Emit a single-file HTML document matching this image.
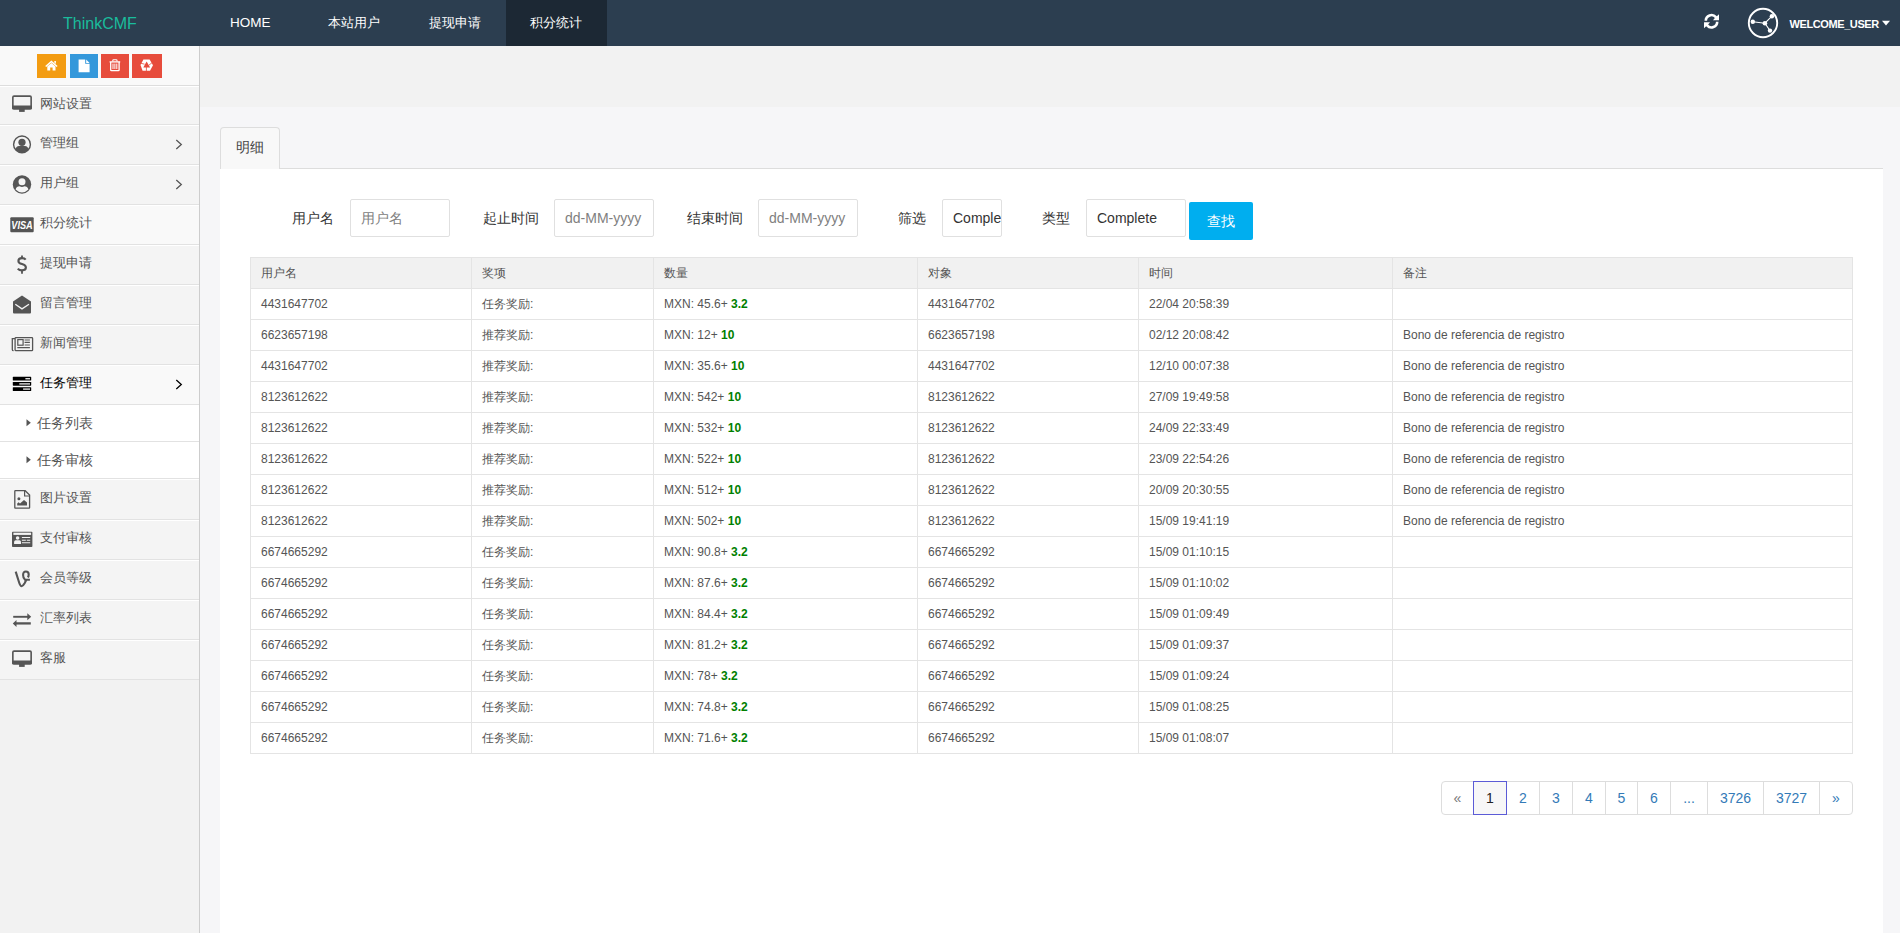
<!DOCTYPE html>
<html><head><meta charset="utf-8">
<style>
*{box-sizing:border-box;margin:0;padding:0}
html,body{width:1900px;height:933px;overflow:hidden;background:#f6f6f8;font-family:"Liberation Sans",sans-serif;}
.abs{position:absolute}
#hdr{position:absolute;left:0;top:0;width:1900px;height:46px;background:#2c3e50;color:#fff}
#hdr .logo{position:absolute;left:63px;top:14.5px;font-size:16px;color:#1abc9c;line-height:18px}
#hdr .nav{position:absolute;top:0;height:46px;line-height:46px;font-size:13px;color:#fff}
#hdr .active{background:#1c2834}
#side{position:absolute;left:0;top:46px;width:200px;height:887px;background:#f2f2f2;border-right:1px solid #cdcdcd}
.tools{position:absolute;left:0;top:46px;width:199px;height:40px;background:#f9f9f9;border-bottom:1px solid #ddd}
.tb{position:absolute;top:54px;height:24px}
.row{position:absolute;left:0;width:199px;border-bottom:1px solid #e2e2e2}
.rt{position:absolute;font-size:13px;line-height:20px;white-space:nowrap}
.ic{position:absolute;overflow:visible}
#main{position:absolute;left:200px;top:46px;width:1700px;height:887px;background:#f6f6f8}
#band{position:absolute;left:200px;top:46px;width:1700px;height:61px;background:#f2f2f2}
#tab{position:absolute;left:220px;top:127px;width:60px;height:42px;border:1px solid #ddd;border-bottom:none;border-radius:4px 4px 0 0;background:#f8f8f8;font-size:14px;color:#444;line-height:39px;padding-left:15px;z-index:3}
#panel{position:absolute;left:220px;top:168px;width:1663px;height:765px;background:#fff;border-top:1px solid #ddd}
.lbl{position:absolute;top:208px;font-size:14px;color:#333;line-height:20px}
.inp{position:absolute;top:199px;height:38px;border:1px solid #e0e0e0;border-radius:2px;background:#fff;font-size:14px;line-height:36px;padding-left:10px;overflow:hidden;white-space:nowrap}
.ph{color:#808080}
#btn{position:absolute;left:1189px;top:202px;width:64px;height:38px;border-radius:2px;background:#00aeef;color:#fff;font-size:14px;line-height:38px;text-align:center}
table{position:absolute;left:250px;top:257px;border-collapse:separate;border-spacing:0;table-layout:fixed;width:1603px;border-left:1px solid #e4e4e4;border-top:1px solid #e4e4e4;font-size:12px;color:#555}
td,th{border-right:1px solid #e4e4e4;border-bottom:1px solid #e4e4e4;height:31px;padding:0 10px;text-align:left;font-weight:normal;white-space:nowrap;overflow:hidden}
th{background:#f1f1f1;color:#555}
b.g{color:#008000}
#pg{position:absolute;left:1441px;top:781px;height:34px;font-size:14px}
#pg span{position:absolute;top:0;height:34px;line-height:32px;border:1px solid #ddd;color:#337ab7;text-align:center;background:#fff}
</style></head><body>
<div id="hdr">
  <div class="logo">ThinkCMF</div>
  <div class="nav" style="left:230px;font-size:13.5px">HOME</div>
  <div class="nav" style="left:328px">本站用户</div>
  <div class="nav" style="left:429px">提现申请</div>
  <div class="nav active" style="left:506px;width:101px;padding-left:24px">积分统计</div>
  <svg class="ic" style="left:1704px;top:14px" width="15" height="14.5" viewBox="0 0 15 14.5"><path d="M0.5 6.8 A7 7 0 0 1 12.86 2.3 L15 0.3 V6.3 H9 L10.87 3.97 A4.4 4.4 0 0 0 3.1 6.8 Z" fill="#fff"/><path d="M14.5 7.7 A7 7 0 0 1 2.14 12.2 L0 14.2 V8.2 H6 L4.13 10.53 A4.4 4.4 0 0 0 11.9 7.7 Z" fill="#fff"/></svg>
  <svg class="ic" style="left:1747px;top:7px" width="32" height="32" viewBox="0 0 32 32"><circle cx="16" cy="16" r="14.2" fill="none" stroke="#fff" stroke-width="1.9"/><path d="M5.8 14.8 L17.9 16.2 L24.9 9.2 M17.9 16.2 L23 23.6" stroke="#fff" stroke-width="1.1" fill="none"/><circle cx="5.8" cy="14.8" r="2.2" fill="#fff"/><circle cx="17.9" cy="16.2" r="2.3" fill="#fff"/><circle cx="24.9" cy="9.2" r="2.2" fill="#fff"/><circle cx="23" cy="23.6" r="2.2" fill="#fff"/></svg>
  <div class="abs" style="left:1789.5px;top:17px;font-size:11px;font-weight:bold;line-height:14px;letter-spacing:-0.4px;color:#fff">WELCOME_USER</div>
  <svg class="ic" style="left:1881px;top:20px" width="10" height="7" viewBox="0 0 10 7"><path d="M1 0.8 H9 L5 5.6 Z" fill="#fff"/></svg>
</div>
<div id="band"></div>
<div id="side"></div>
<div class="tools"></div>
<div class="tb" style="left:37px;width:29px;background:#f39c12"></div>
<div class="tb" style="left:70px;width:28px;background:#3498db"></div>
<div class="tb" style="left:101px;width:28px;background:#e74c3c"></div>
<div class="tb" style="left:132px;width:30px;background:#e74c3c"></div>
<svg class="ic" style="left:45px;top:60px" width="13" height="11" viewBox="0 0 13 11"><path d="M6.4 0.6 L12.6 6 L11.6 7 L6.4 2.5 L1.2 7 L0.2 6 Z" fill="#fff"/><path d="M9.3 0.9 H10.9 V3.9 L9.3 2.5 Z" fill="#fff"/><path d="M2.3 6.4 L6.4 2.9 L10.5 6.4 V10.4 H7.6 V7.6 H5.2 V10.4 H2.3 Z" fill="#fff"/></svg>
<svg class="ic" style="left:78px;top:59px" width="12" height="14" viewBox="0 0 12 14"><path d="M0.6 0.6 H7.2 V4.8 H11.6 V13.2 H0.6 Z" fill="#fff"/><path d="M8.2 0.6 L11.6 3.9 H8.2 Z" fill="#fff"/></svg>
<svg class="ic" style="left:109px;top:59px" width="12" height="13" viewBox="0 0 12 13"><path d="M0.6 2.9 H11.2" stroke="#fff" stroke-width="1.3"/><path d="M3.8 2.6 V1.6 Q3.8 0.8 4.6 0.8 H7.2 Q8 0.8 8 1.6 V2.6" fill="none" stroke="#fff" stroke-width="1.1"/><path d="M1.7 3 V10.9 Q1.7 11.7 2.5 11.7 H9.3 Q10.1 11.7 10.1 10.9 V3" fill="none" stroke="#fff" stroke-width="1.3"/><path d="M4 4.6 V10 M5.9 4.6 V10 M7.8 4.6 V10" stroke="#fff" stroke-width="1"/></svg>
<svg class="ic" style="left:140px;top:59px" width="14" height="13" viewBox="0 0 14 13"><path d="M3.4 0.6 H9.6 L13 6.2 L10 11.7 H2.6 L0.5 6 Z" fill="#fff"/><path d="M6.6 2.4 L3.3 8.4 H10.1 Z" fill="#e74c3c"/><path d="M0.6 4.2 L4.6 5.2 M6.4 8 V12 M12.4 3.4 L8.6 6.4" stroke="#e74c3c" stroke-width="0.8"/></svg>
<div class="row" style="top:86px;height:39px;background:#f4f4f4;border-top:1px solid #fff;"></div>
<div class="rt" style="left:40px;top:93.5px;color:#555;font-size:13px">网站设置</div>
<svg class="ic" style="left:12px;top:95px" width="20" height="18" viewBox="0 0 20 18" ><rect x="0.85" y="1.15" width="18.3" height="12.6" rx="1.2" fill="none" stroke="#555" stroke-width="1.6"/><rect x="0.05" y="10.6" width="19.9" height="3.9" rx="1" fill="#555"/><rect x="7.1" y="14" width="5.6" height="2.9" fill="#555"/></svg>
<div class="row" style="top:125px;height:40px;background:#f4f4f4;border-top:1px solid #fff;"></div>
<div class="rt" style="left:40px;top:133.0px;color:#555;font-size:13px">管理组</div>
<svg class="ic" style="left:12px;top:134px" width="20" height="21" viewBox="0 0 20 21" ><defs><clipPath id="uc1"><circle cx="10" cy="10.4" r="8.4"/></clipPath></defs><circle cx="10" cy="10.4" r="8.4" fill="none" stroke="#555" stroke-width="1.4"/><circle cx="10" cy="8.3" r="3.6" fill="#555"/><path d="M3.6 19 L3.6 15.5 Q4 12.3 7 12.1 L13 12.1 Q16 12.3 16.4 15.5 L16.4 19 Z" fill="#555" clip-path="url(#uc1)"/></svg>
<svg class="ic" style="left:175px;top:139px" width="8" height="12" viewBox="0 0 8 12" ><path d="M1.3 1 L6.3 5.5 L1.3 10" fill="none" stroke="#555" stroke-width="1.3"/></svg>
<div class="row" style="top:165px;height:40px;background:#f4f4f4;border-top:1px solid #fff;"></div>
<div class="rt" style="left:40px;top:173.0px;color:#555;font-size:13px">用户组</div>
<svg class="ic" style="left:12px;top:174px" width="20" height="21" viewBox="0 0 20 21" ><circle cx="10" cy="10.5" r="9.2" fill="#555"/><circle cx="10" cy="7.8" r="3.5" fill="#f4f4f4"/><path d="M3.6 15.6 Q4.5 12.3 7.6 12.3 Q10 13.6 12.4 12.3 Q15.5 12.3 16.4 15.6 Q13.8 18.4 10 18.4 Q6.2 18.4 3.6 15.6 Z" fill="#f4f4f4"/></svg>
<svg class="ic" style="left:175px;top:179px" width="8" height="12" viewBox="0 0 8 12" ><path d="M1.3 1 L6.3 5.5 L1.3 10" fill="none" stroke="#555" stroke-width="1.3"/></svg>
<div class="row" style="top:205px;height:40px;background:#f9f9f9;border-top:1px solid #fff;"></div>
<div class="rt" style="left:40px;top:213.0px;color:#555;font-size:13px">积分统计</div>
<svg class="ic" style="left:10px;top:216.5px" width="24" height="16" viewBox="0 0 24 16" ><rect x="0.3" y="0.2" width="23.4" height="15" rx="1" fill="#555"/><text x="12" y="11.6" text-anchor="middle" font-family="Liberation Sans" font-weight="bold" font-style="italic" font-size="10.6" fill="#fff" textLength="21.5" lengthAdjust="spacingAndGlyphs">VISA</text></svg>
<div class="row" style="top:245px;height:40px;background:#f4f4f4;border-top:1px solid #fff;"></div>
<div class="rt" style="left:40px;top:253.0px;color:#555;font-size:13px">提现申请</div>
<svg class="ic" style="left:17px;top:255px" width="11" height="20" viewBox="0 0 11 20" ><path d="M5 0.5 V3 M5 15.8 V18.8" stroke="#555" stroke-width="1.8" fill="none"/><path d="M8.7 4.6 Q7.6 3.1 5 3.1 Q1.4 3.1 1.4 5.9 Q1.4 8.2 5 9.1 Q8.9 10.1 8.9 12.6 Q8.9 15.4 5 15.4 Q2.2 15.4 0.8 13.6" stroke="#555" stroke-width="2.1" fill="none"/></svg>
<div class="row" style="top:285px;height:40px;background:#f4f4f4;border-top:1px solid #fff;"></div>
<div class="rt" style="left:40px;top:293.0px;color:#555;font-size:13px">留言管理</div>
<svg class="ic" style="left:13px;top:295px" width="18" height="19" viewBox="0 0 18 19" ><path d="M0 6.4 L9 0.5 L18 6.4 V17.6 Q18 18.6 17 18.6 H1 Q0 18.6 0 17.6 Z" fill="#555"/><path d="M2.3 9.2 L9 13.9 L16 9.2" stroke="#f4f4f4" stroke-width="1.3" fill="none"/></svg>
<div class="row" style="top:325px;height:40px;background:#f4f4f4;border-top:1px solid #fff;"></div>
<div class="rt" style="left:40px;top:333.0px;color:#555;font-size:13px">新闻管理</div>
<svg class="ic" style="left:11px;top:335.5px" width="23" height="16" viewBox="0 0 23 16" ><rect x="4.1" y="1.6" width="17.5" height="13.1" rx="0.8" fill="none" stroke="#555" stroke-width="1.3"/><path d="M4.1 2.6 H1.3 V13.4 Q1.3 14.7 2.6 14.7" fill="none" stroke="#555" stroke-width="1.3"/><rect x="6.8" y="3.6" width="5.3" height="5.6" fill="none" stroke="#555" stroke-width="1.2"/><path d="M13.6 4 H18.9 M13.6 6.4 H18.9 M13.6 9 H18.9 M6.3 11.6 H18.9" stroke="#555" stroke-width="1.1"/></svg>
<div class="row" style="top:365px;height:40px;background:#f9f9f9;border-top:1px solid #fff;"></div>
<div class="rt" style="left:40px;top:373.0px;color:#000;font-size:13px">任务管理</div>
<svg class="ic" style="left:12px;top:376px" width="20" height="16" viewBox="0 0 20 16" ><rect x="0.8" y="0.8" width="18.4" height="3.7" rx="0.6" fill="#000"/><rect x="0.8" y="6" width="18.4" height="3.7" rx="0.6" fill="#000"/><rect x="0.8" y="11.2" width="18.4" height="3.8" rx="0.6" fill="#000"/><rect x="13.4" y="2" width="4.6" height="1.4" fill="#ddd"/><rect x="7.3" y="7.2" width="10.7" height="1.4" fill="#ddd"/><rect x="11.1" y="12.4" width="6.9" height="1.4" fill="#ddd"/></svg>
<svg class="ic" style="left:175px;top:379px" width="8" height="12" viewBox="0 0 8 12" ><path d="M1.3 1 L6.3 5.5 L1.3 10" fill="none" stroke="#000" stroke-width="1.3"/></svg>
<div class="row" style="top:405px;height:37px;background:#fff;"></div>
<div class="rt" style="left:37px;top:412.5px;color:#555;font-size:14px">任务列表</div>
<svg class="ic" style="left:26px;top:419px" width="6" height="8" viewBox="0 0 6 8" ><path d="M0.5 0.3 L4.8 3.8 L0.5 7.3 Z" fill="#555"/></svg>
<div class="row" style="top:442px;height:37px;background:#fff;"></div>
<div class="rt" style="left:37px;top:449.5px;color:#555;font-size:14px">任务审核</div>
<svg class="ic" style="left:26px;top:456px" width="6" height="8" viewBox="0 0 6 8" ><path d="M0.5 0.3 L4.8 3.8 L0.5 7.3 Z" fill="#555"/></svg>
<div class="row" style="top:479px;height:41px;background:#f4f4f4;border-top:1px solid #fff;"></div>
<div class="rt" style="left:40px;top:487.5px;color:#555;font-size:13px">图片设置</div>
<svg class="ic" style="left:14px;top:490px" width="17" height="19" viewBox="0 0 17 19" ><path d="M0.8 1.2 Q0.8 0.7 1.4 0.7 H11.2 L15.6 5.1 V17.6 Q15.6 18.2 15 18.2 H1.4 Q0.8 18.2 0.8 17.6 Z" fill="none" stroke="#555" stroke-width="1.3"/><path d="M10.6 0.8 V6 H15.6" fill="none" stroke="#555" stroke-width="1.2"/><circle cx="4.9" cy="8.8" r="1.5" fill="#555"/><path d="M3.2 15.6 V13.6 L4.6 12.3 L6 13.4 L10 9.9 L13 12.5 V15.6 Z" fill="#555"/></svg>
<div class="row" style="top:520px;height:40px;background:#f4f4f4;border-top:1px solid #fff;"></div>
<div class="rt" style="left:40px;top:528.0px;color:#555;font-size:13px">支付审核</div>
<svg class="ic" style="left:12px;top:531px" width="21" height="17" viewBox="0 0 21 17" ><rect x="0" y="0.8" width="20.4" height="15.2" rx="0.8" fill="#555"/><rect x="1.4" y="1.7" width="17.7" height="2.2" fill="#f4f4f4"/><circle cx="5.6" cy="7" r="1.8" fill="#f4f4f4"/><path d="M2.1 12.9 V10.8 Q2.3 9.4 3.7 9.3 H7.5 Q8.9 9.4 9 10.8 V12.9 Z" fill="#f4f4f4"/><path d="M9.9 6.5 H18.2 M9.9 9.3 H13.8 M14.8 9.3 H18.2 M9.9 11.7 H18.2" stroke="#f4f4f4" stroke-width="1.1"/></svg>
<div class="row" style="top:560px;height:40px;background:#f4f4f4;border-top:1px solid #fff;"></div>
<div class="rt" style="left:40px;top:568.0px;color:#555;font-size:13px">会员等级</div>
<svg class="ic" style="left:14px;top:569.5px" width="17" height="18" viewBox="0 0 17 18" ><path d="M1.7 1.6 L5.2 12.8 Q6.3 16.2 7.6 16.2 Q8.9 16.2 10.6 13.2 L12.4 9.7 M10.4 9.7 H15.9 M10.9 9.5 Q9.1 8.4 9.1 5 Q9.1 1.5 11.9 1.5 Q14.7 1.5 14.7 4.4 Q14.7 6.4 13.8 7.4" fill="none" stroke="#555" stroke-width="2.1"/></svg>
<div class="row" style="top:600px;height:40px;background:#f4f4f4;border-top:1px solid #fff;"></div>
<div class="rt" style="left:40px;top:608.0px;color:#555;font-size:13px">汇率列表</div>
<svg class="ic" style="left:12px;top:613px" width="20" height="15" viewBox="0 0 20 15" ><path d="M1.2 3.8 H16.3" stroke="#555" stroke-width="1.9"/><path d="M15.3 0.3 L19.2 3.8 L15.3 7.3 Z" fill="#555"/><path d="M2.8 10.4 H18.8" stroke="#555" stroke-width="2.3"/><path d="M4.5 6.9 L0.8 10.4 L4.5 13.9 Z" fill="#555"/></svg>
<div class="row" style="top:640px;height:40px;background:#f4f4f4;border-top:1px solid #fff;"></div>
<div class="rt" style="left:40px;top:648.0px;color:#555;font-size:13px">客服</div>
<svg class="ic" style="left:12px;top:650px" width="20" height="18" viewBox="0 0 20 18" ><rect x="0.85" y="1.15" width="18.3" height="12.6" rx="1.2" fill="none" stroke="#555" stroke-width="1.6"/><rect x="0.05" y="10.6" width="19.9" height="3.9" rx="1" fill="#555"/><rect x="7.1" y="14" width="5.6" height="2.9" fill="#555"/></svg>
<div id="panel"></div>
<div id="tab">明细</div>

<div class="lbl" style="left:292px">用户名</div>
<div class="inp ph" style="left:350px;width:100px">用户名</div>
<div class="lbl" style="left:483px">起止时间</div>
<div class="inp ph" style="left:554px;width:100px">dd-MM-yyyy</div>
<div class="lbl" style="left:687px">结束时间</div>
<div class="inp ph" style="left:758px;width:100px">dd-MM-yyyy</div>
<div class="lbl" style="left:898px">筛选</div>
<div class="inp" style="left:942px;width:60px;color:#333">Complete</div>
<div class="lbl" style="left:1042px">类型</div>
<div class="inp" style="left:1086px;width:100px;color:#333">Complete</div>
<div id="btn">查找</div>
<table>
<colgroup><col style="width:221px"><col style="width:182px"><col style="width:264px"><col style="width:221px"><col style="width:254px"><col style="width:460px"></colgroup>
<tr><th>用户名</th><th>奖项</th><th>数量</th><th>对象</th><th>时间</th><th>备注</th></tr>
<tr><td>4431647702</td><td>任务奖励:</td><td>MXN: 45.6+ <b class="g">3.2</b></td><td>4431647702</td><td>22/04 20:58:39</td><td></td></tr>
<tr><td>6623657198</td><td>推荐奖励:</td><td>MXN: 12+ <b class="g">10</b></td><td>6623657198</td><td>02/12 20:08:42</td><td>Bono de referencia de registro</td></tr>
<tr><td>4431647702</td><td>推荐奖励:</td><td>MXN: 35.6+ <b class="g">10</b></td><td>4431647702</td><td>12/10 00:07:38</td><td>Bono de referencia de registro</td></tr>
<tr><td>8123612622</td><td>推荐奖励:</td><td>MXN: 542+ <b class="g">10</b></td><td>8123612622</td><td>27/09 19:49:58</td><td>Bono de referencia de registro</td></tr>
<tr><td>8123612622</td><td>推荐奖励:</td><td>MXN: 532+ <b class="g">10</b></td><td>8123612622</td><td>24/09 22:33:49</td><td>Bono de referencia de registro</td></tr>
<tr><td>8123612622</td><td>推荐奖励:</td><td>MXN: 522+ <b class="g">10</b></td><td>8123612622</td><td>23/09 22:54:26</td><td>Bono de referencia de registro</td></tr>
<tr><td>8123612622</td><td>推荐奖励:</td><td>MXN: 512+ <b class="g">10</b></td><td>8123612622</td><td>20/09 20:30:55</td><td>Bono de referencia de registro</td></tr>
<tr><td>8123612622</td><td>推荐奖励:</td><td>MXN: 502+ <b class="g">10</b></td><td>8123612622</td><td>15/09 19:41:19</td><td>Bono de referencia de registro</td></tr>
<tr><td>6674665292</td><td>任务奖励:</td><td>MXN: 90.8+ <b class="g">3.2</b></td><td>6674665292</td><td>15/09 01:10:15</td><td></td></tr>
<tr><td>6674665292</td><td>任务奖励:</td><td>MXN: 87.6+ <b class="g">3.2</b></td><td>6674665292</td><td>15/09 01:10:02</td><td></td></tr>
<tr><td>6674665292</td><td>任务奖励:</td><td>MXN: 84.4+ <b class="g">3.2</b></td><td>6674665292</td><td>15/09 01:09:49</td><td></td></tr>
<tr><td>6674665292</td><td>任务奖励:</td><td>MXN: 81.2+ <b class="g">3.2</b></td><td>6674665292</td><td>15/09 01:09:37</td><td></td></tr>
<tr><td>6674665292</td><td>任务奖励:</td><td>MXN: 78+ <b class="g">3.2</b></td><td>6674665292</td><td>15/09 01:09:24</td><td></td></tr>
<tr><td>6674665292</td><td>任务奖励:</td><td>MXN: 74.8+ <b class="g">3.2</b></td><td>6674665292</td><td>15/09 01:08:25</td><td></td></tr>
<tr><td>6674665292</td><td>任务奖励:</td><td>MXN: 71.6+ <b class="g">3.2</b></td><td>6674665292</td><td>15/09 01:08:07</td><td></td></tr>
</table>
<div id="pg">
<span style="left:0px;width:33px;color:#777;border-radius:4px 0 0 4px">&laquo;</span>
<span style="left:32px;width:34px;color:#222;background:#f7f7f7;border-color:#5b5bd6;z-index:2">1</span>
<span style="left:65px;width:34px">2</span>
<span style="left:98px;width:34px">3</span>
<span style="left:131px;width:34px">4</span>
<span style="left:164px;width:33px">5</span>
<span style="left:196px;width:34px">6</span>
<span style="left:229px;width:38px">...</span>
<span style="left:266px;width:57px">3726</span>
<span style="left:322px;width:57px">3727</span>
<span style="left:378px;width:34px;border-radius:0 4px 4px 0">&raquo;</span>
</div>
</body></html>
